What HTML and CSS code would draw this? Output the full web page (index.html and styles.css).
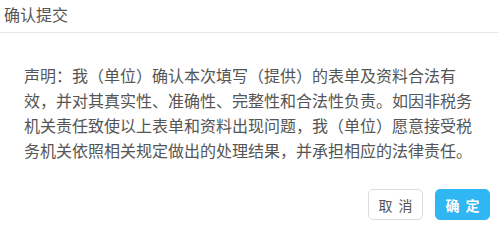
FILE: index.html
```html
<!DOCTYPE html>
<html>
<head>
<meta charset="utf-8">
<link rel="stylesheet" href="styles.css">
</head>
<body>
<div class="dialog">
  <div class="header">确认提交</div>
  <div class="content">声明：我（单位）确认本次填写（提供）的表单及资料合法有效，并对其真实性、准确性、完整性和合法性负责。如因非税务机关责任致使以上表单和资料出现问题，我（单位）愿意接受税务机关依照相关规定做出的处理结果，并承担相应的法律责任。</div>
  <div class="footer">
    <button class="btn btn-cancel">取消</button>
    <button class="btn btn-ok">确定</button>
  </div>
</div>
</body>
</html>
```

FILE: styles.css
```css
html, body {
  margin: 0;
  padding: 0;
  background: #fff;
}
body {
  font-family: "Noto Sans CJK SC", "Noto Sans", sans-serif;
  width: 499px;
  height: 231px;
  overflow: hidden;
}
.dialog {
  display: flex;
  flex-direction: column;
  width: 499px;
}
.header {
  height: 25px;
  padding: 3px 4px 4px 4px;
  font-size: 16px;
  line-height: 22px;
  color: #555;
  border-bottom: 1px solid #e8e8e8;
}
.content {
  padding: 30px 24px 0 24px;
  font-size: 16px;
  line-height: 25px;
  color: #555;
}
.footer {
  display: flex;
  justify-content: flex-end;
  gap: 12px;
  padding: 26px 9px 0 0;
}
.btn {
  width: 55px;
  height: 31px;
  border-radius: 5px;
  font-family: "Noto Sans CJK SC", "Noto Sans", sans-serif;
  font-size: 14px;
  letter-spacing: 6px;
  text-indent: 6px;
  padding: 0;
  cursor: pointer;
}
.btn-cancel {
  background: #fff;
  border: 1px solid #dcdcdc;
  color: #555;
}
.btn-ok {
  background: #30b6f3;
  border: 1px solid #30b6f3;
  color: #fff;
  font-weight: bold;
}
```
